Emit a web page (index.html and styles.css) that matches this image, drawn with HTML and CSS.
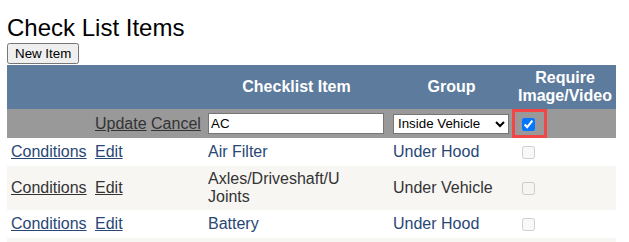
FILE: index.html
```html
<!DOCTYPE html>
<html>
<head>
<meta charset="utf-8">
<title>Check List Items</title>
<link rel="stylesheet" href="styles.css">
</head>
<body>
<div class="page">
  <div class="title">Check List Items</div>
  <div class="actions"><button type="button" class="btn">New Item</button></div>
  <table class="grid">
    <colgroup>
      <col class="c1"><col class="c2"><col class="c3"><col class="c4"><col class="c5">
    </colgroup>
    <thead>
      <tr class="head">
        <th></th>
        <th></th>
        <th>Checklist Item</th>
        <th>Group</th>
        <th>Require Image/Video</th>
      </tr>
    </thead>
    <tbody>
      <tr class="edit">
        <td></td>
        <td class="cmd"><a href="#">Update</a> <a href="#">Cancel</a></td>
        <td><input type="text" class="txt" value="AC"></td>
        <td>
          <select class="sel">
            <option selected>Inside Vehicle</option>
            <option>Under Hood</option>
            <option>Under Vehicle</option>
            <option>Exterior</option>
          </select>
        </td>
        <td><span class="hl"><input type="checkbox" class="chk" checked></span></td>
      </tr>
      <tr class="alt">
        <td><a href="#">Conditions</a></td>
        <td><a href="#">Edit</a></td>
        <td>Air Filter</td>
        <td>Under Hood</td>
        <td><input type="checkbox" class="cb" disabled></td>
      </tr>
      <tr class="row">
        <td><a href="#">Conditions</a></td>
        <td><a href="#">Edit</a></td>
        <td>Axles/Driveshaft/U Joints</td>
        <td>Under Vehicle</td>
        <td><input type="checkbox" class="cb" disabled></td>
      </tr>
      <tr class="alt">
        <td><a href="#">Conditions</a></td>
        <td><a href="#">Edit</a></td>
        <td>Battery</td>
        <td>Under Hood</td>
        <td><input type="checkbox" class="cb" disabled></td>
      </tr>
      <tr class="row">
        <td><a href="#">Conditions</a></td>
        <td><a href="#">Edit</a></td>
        <td>Belts &amp; Hoses</td>
        <td>Under Hood</td>
        <td><input type="checkbox" class="cb" disabled></td>
      </tr>
    </tbody>
  </table>
</div>
</body>
</html>
```
FILE: styles.css
```css
html, body {
  margin: 0;
  padding: 0;
  background: #ffffff;
}
body {
  font-family: "Liberation Sans", Arial, sans-serif;
  color: #000;
}
.page {
  padding: 14px 7px 0 7px;
}
.title {
  font-size: 24px;
  line-height: 28px;
  font-weight: normal;
}
.actions {
  height: 22px;
  padding-top: 1px;
}
.btn {
  font-family: "Liberation Sans", Arial, sans-serif;
  font-size: 13.333px;
  height: 21px;
  padding: 1px 6px;
  margin: 0;
  vertical-align: top;
}
.grid {
  border-collapse: collapse;
  border-spacing: 0;
  table-layout: fixed;
  width: 609px;
  font-size: 16px;
}
.c1 { width: 84px; }
.c2 { width: 113px; }
.c3 { width: 185px; }
.c4 { width: 125px; }
.c5 { width: 102px; }
.grid th,
.grid td {
  padding: 4px;
  vertical-align: middle;
  line-height: 18px;
}
.grid td {
  text-align: left;
  height: 20px;
}
.head {
  background: #5d7b9d;
  color: #ffffff;
}
.head th {
  font-weight: bold;
  text-align: center;
}
.edit {
  background: #999999;
  color: #333333;
}
.edit td {
  height: 21px;
}
.cmd {
  white-space: nowrap;
  overflow: visible;
}
.alt {
  background: #ffffff;
  color: #284775;
}
.row {
  background: #f7f6f3;
  color: #333333;
}
.grid a {
  color: inherit;
  text-decoration: underline;
}
.txt {
  box-sizing: border-box;
  width: 176px;
  height: 21px;
  font-family: "Liberation Sans", Arial, sans-serif;
  font-size: 13.333px;
  margin: 0;
  padding: 1px 2px;
  border: 1px solid #767676;
  vertical-align: middle;
}
.sel {
  box-sizing: border-box;
  width: 116px;
  height: 20px;
  font-family: "Liberation Sans", Arial, sans-serif;
  font-size: 13.333px;
  margin: 0;
  vertical-align: middle;
  background: #fff;
  color: #000;
}
.hl {
  position: relative;
  display: inline-block;
  margin: 0 0 0 4px;
  vertical-align: middle;
}
.hl::after {
  content: "";
  position: absolute;
  top: -9px;
  left: -10px;
  right: -12px;
  bottom: -7px;
  border: 3px solid #f24545;
  pointer-events: none;
}
.chk {
  display: block;
  margin: 0;
  width: 13px;
  height: 13px;
}
.cb {
  margin: 0 0 0 4px;
  width: 13px;
  height: 13px;
  vertical-align: middle;
}
```
